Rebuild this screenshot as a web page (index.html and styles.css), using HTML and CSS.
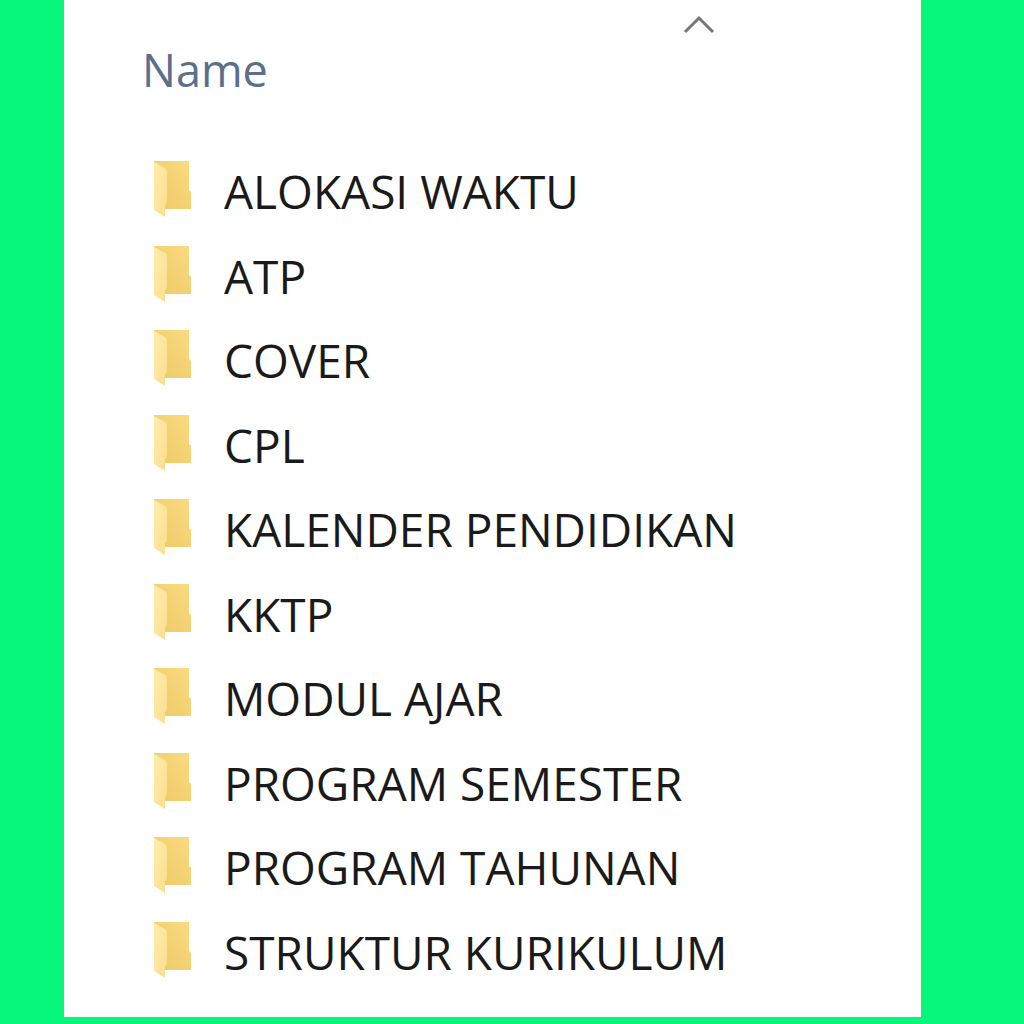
FILE: index.html
```
<!DOCTYPE html>
<html lang="id">

<head>
    <meta charset="UTF-8">
    <title>Folder</title>
    <link rel="stylesheet" href="styles.css">
</head>

<body>
    <svg class="symbols" aria-hidden="true">
        <defs>
            <linearGradient id="back" x1="0" x2="1" y1="1" y2="0">
                <stop offset="0" stop-color="#edc967"/>
                <stop offset="1" stop-color="#fadb80"/>
            </linearGradient>
            <linearGradient id="flap" x1="0" x2="1" y1="0" y2="1">
                <stop offset="0" stop-color="#ffedad"/>
                <stop offset="1" stop-color="#fbdd8b"/>
            </linearGradient>
        </defs>
        <symbol id="folder" viewBox="0 0 38 56">
            <path fill="url(#back)" d="M0 0H35V29L37 31V48H10L0 44Z"/>
            <path fill="url(#flap)" d="M0 1L11 7Q13 8 13 11V40Q13 43 11 44V56L0 49Z"/>
        </symbol>
    </svg>

    <main class="panel">
        <header class="column-header">
            <svg class="sort-arrow" viewBox="0 0 32 20" aria-hidden="true">
                <path d="M2 18L16 4L30 18"/>
            </svg>
            <h1 class="column-name">Name</h1>
        </header>
        <ul class="folders">
            <li class="folder"><svg class="icon"><use href="#folder"/></svg><span class="name">ALOKASI WAKTU</span></li>
            <li class="folder"><svg class="icon"><use href="#folder"/></svg><span class="name">ATP</span></li>
            <li class="folder"><svg class="icon"><use href="#folder"/></svg><span class="name">COVER</span></li>
            <li class="folder"><svg class="icon"><use href="#folder"/></svg><span class="name">CPL</span></li>
            <li class="folder"><svg class="icon"><use href="#folder"/></svg><span class="name">KALENDER PENDIDIKAN</span></li>
            <li class="folder"><svg class="icon"><use href="#folder"/></svg><span class="name">KKTP</span></li>
            <li class="folder"><svg class="icon"><use href="#folder"/></svg><span class="name">MODUL AJAR</span></li>
            <li class="folder"><svg class="icon"><use href="#folder"/></svg><span class="name">PROGRAM SEMESTER</span></li>
            <li class="folder"><svg class="icon"><use href="#folder"/></svg><span class="name">PROGRAM TAHUNAN</span></li>
            <li class="folder"><svg class="icon"><use href="#folder"/></svg><span class="name">STRUKTUR KURIKULUM</span></li>
        </ul>
    </main>
</body>

</html>
```
FILE: styles.css
```
* {
    box-sizing: border-box;
}

body {
    display: flex;
    min-height: 100vh;
    margin: 0;
    padding: 0 103px 7px 64px;
    background-color: #06f77c;
    font-family: "Open Sans", "Noto Sans", sans-serif;
    font-size: 46px;
    line-height: 56px;
    color: #1a1a1a;
}

.symbols {
    position: absolute;
    width: 0;
    height: 0;
}

.panel {
    flex: 1;
    display: flex;
    flex-direction: column;
    padding: 14px 78px 25px;
    background-color: #fff;
}

.column-header {
    display: flex;
    flex-direction: column;
    padding-bottom: 49px;
}

.sort-arrow {
    align-self: flex-end;
    width: 32px;
    height: 20px;
    margin-right: 128px;
    fill: none;
    stroke: #777;
    stroke-width: 3;
}

.column-name {
    margin: 8px 0 0;
    font-size: 45px;
    font-weight: 400;
    line-height: 56px;
    color: #5b6f8c;
}

.folders {
    flex: 1;
    display: flex;
    flex-direction: column;
    margin: 0;
    padding: 0 0 0 12px;
    list-style: none;
}

.folder {
    flex: 1;
    display: flex;
    align-items: center;
    gap: 32px;
    white-space: nowrap;
}

.icon {
    flex: none;
    width: 38px;
    height: 56px;
}

.name {
    padding-top: 4px;
}
```
